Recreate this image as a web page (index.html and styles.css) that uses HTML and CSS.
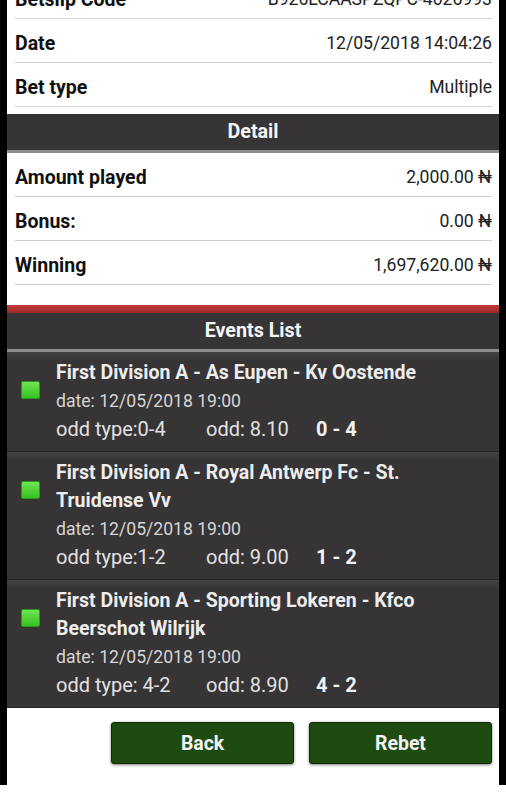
FILE: index.html
```html
<!DOCTYPE html>
<html lang="en">
<head>
    <meta charset="UTF-8">
    <meta name="viewport" content="width=device-width, initial-scale=1.0">
    <title>Betslip Detail</title>
    <link rel="stylesheet" href="styles.css">
</head>
<body>

    <div class="frame">
        <div class="page">

            <div class="info">
                <div class="row"><span class="label">Betslip Code</span><span class="value">B926LCAASPZQPC-4026993</span></div>
                <div class="row"><span class="label">Date</span><span class="value">12/05/2018 14:04:26</span></div>
                <div class="row"><span class="label">Bet type</span><span class="value">Multiple</span></div>
            </div>

            <h2 class="section-title">Detail</h2>

            <div class="detail">
                <div class="row"><span class="label">Amount played</span><span class="value">2,000.00 &#8358;</span></div>
                <div class="row"><span class="label">Bonus:</span><span class="value">0.00 &#8358;</span></div>
                <div class="row"><span class="label">Winning</span><span class="value">1,697,620.00 &#8358;</span></div>
            </div>

            <div class="red-bar"></div>
            <h2 class="section-title">Events List</h2>

            <ul class="events">
                <li class="event">
                    <span class="status"></span>
                    <div class="event-info">
                        <div class="event-name">First Division A - As Eupen - Kv Oostende</div>
                        <div class="event-date">date: 12/05/2018 19:00</div>
                        <div class="event-odds">
                            <span class="odd-type">odd type:0-4</span>
                            <span class="odd">odd: 8.10</span>
                            <span class="score">0 - 4</span>
                        </div>
                    </div>
                </li>
                <li class="event">
                    <span class="status"></span>
                    <div class="event-info">
                        <div class="event-name">First Division A - Royal Antwerp Fc - St. Truidense Vv</div>
                        <div class="event-date">date: 12/05/2018 19:00</div>
                        <div class="event-odds">
                            <span class="odd-type">odd type:1-2</span>
                            <span class="odd">odd: 9.00</span>
                            <span class="score">1 - 2</span>
                        </div>
                    </div>
                </li>
                <li class="event">
                    <span class="status"></span>
                    <div class="event-info">
                        <div class="event-name">First Division A - Sporting Lokeren - Kfco Beerschot Wilrijk</div>
                        <div class="event-date">date: 12/05/2018 19:00</div>
                        <div class="event-odds">
                            <span class="odd-type">odd type: 4-2</span>
                            <span class="odd">odd: 8.90</span>
                            <span class="score">4 - 2</span>
                        </div>
                    </div>
                </li>
            </ul>

            <div class="actions">
                <button class="btn">Back</button>
                <button class="btn">Rebet</button>
            </div>

        </div>
    </div>

</body>
</html>
```

FILE: styles.css
```css
body {
    font-family: Roboto, "Liberation Sans", Arial, sans-serif;
    background-color: #fff;
    margin: 0;
    overflow: hidden;
}

.frame {
    background-color: #000;
    height: 785px;
    padding: 0 7px;
    overflow: hidden;
}

.page {
    background: white;
    height: 810px;
    margin-top: -25px;
}

.row {
    display: flex;
    justify-content: space-between;
    align-items: center;
    height: 38px;
    padding-top: 5px;
    margin: 0 7px 0 8px;
    border-bottom: 1px solid #cfcfcf;
}

.label {
    font-size: 19.5px;
    font-weight: bold;
    color: #111;
}

.value {
    font-size: 17.6px;
    color: #222;
}

.info {
    padding-bottom: 7px;
}

.section-title {
    margin: 0;
    height: 36px;
    line-height: 36px;
    background-color: #363435;
    color: #f4f4f4;
    font-size: 19.7px;
    font-weight: bold;
    text-align: center;
    border-bottom: 3px solid #8d8d8d;
}

.detail {
    padding-bottom: 20px;
}

.red-bar {
    height: 8px;
    background: linear-gradient(#c23b3b, #9c2a2a);
}

.events {
    list-style: none;
    margin: 0;
    padding: 0;
}

.event {
    display: flex;
    background: linear-gradient(#434142, #363435 9px);
    padding: 7px 0 8px;
    border-bottom: 1px solid #222;
}

.status {
    flex: none;
    width: 17px;
    height: 16px;
    margin: 22px 16px 0 14px;
    border: 1px solid #2a9a1c;
    border-radius: 2px;
    background: linear-gradient(#70e452, #34c222);
}

.event-info {
    line-height: 28px;
    padding-right: 60px;
}

.event-name {
    font-size: 19.5px;
    font-weight: bold;
    color: #ededed;
}

.event-date {
    font-size: 17.6px;
    color: #d6d6d6;
}

.event-odds {
    display: flex;
    font-size: 20px;
    color: #e2e2e2;
}

.odd-type {
    width: 150px;
}

.odd {
    width: 110px;
}

.score {
    font-weight: bold;
    color: #f2f2f2;
}

.actions {
    display: flex;
    justify-content: flex-end;
    gap: 15px;
    padding: 14px 7px 0;
}

.btn {
    width: 183px;
    height: 42px;
    background-color: #1d4b10;
    color: #f4f4f4;
    border: 1px solid #102a08;
    border-radius: 3px;
    box-shadow: 0 1px 3px rgba(0, 0, 0, 0.5);
    font-family: inherit;
    font-size: 19.4px;
    font-weight: bold;
    cursor: pointer;
}
```
